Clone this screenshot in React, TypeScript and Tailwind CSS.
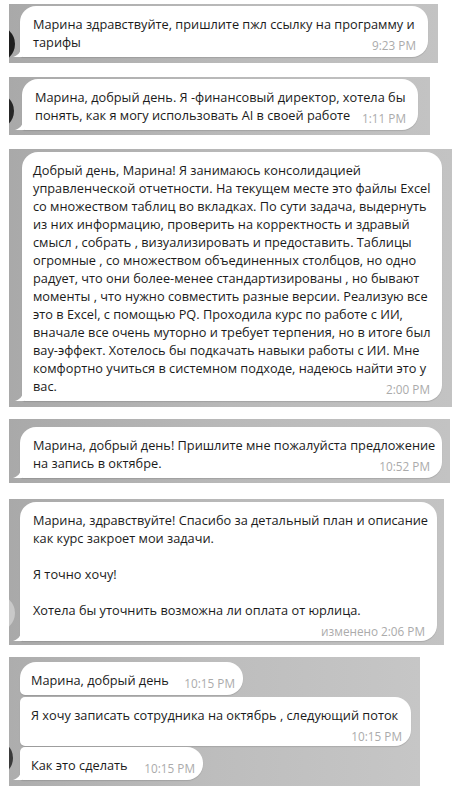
import React from "react";

type BubbleProps = {
  lines: string[];
  time: string;
  width: string;
  shape?: "single" | "first" | "middle" | "last";
  pad?: string;
};

const Tail = () => (
  <svg
    className="absolute -left-[7px] bottom-0"
    width="9"
    height="12"
    viewBox="0 0 9 12"
    fill="none"
  >
    <path d="M9 0 V12 H0 C4 11 8 8 9 0 Z" fill="#ffffff" />
  </svg>
);

const Bubble = ({ lines, time, width, shape = "single", pad = "pl-[13px] pr-[12px]" }: BubbleProps) => {
  const corners =
    shape === "single"
      ? "rounded-t-[16px] rounded-br-[16px] rounded-bl-[3px]"
      : shape === "first"
      ? "rounded-t-[16px] rounded-br-[16px] rounded-bl-[5px]"
      : shape === "middle"
      ? "rounded-r-[16px] rounded-l-[5px]"
      : "rounded-tl-[5px] rounded-r-[16px] rounded-bl-[3px]";
  const tail = shape === "single" || shape === "last";

  return (
    <div
      className={`relative flow-root bg-white ${corners} ${width} ${pad} pt-[9px] pb-[6px] shadow-[0_1px_1px_rgba(0,0,0,0.12)]`}
    >
      {tail && <Tail />}
      <div className="text-[12.75px] leading-[18px] text-[#1b1b1b] whitespace-nowrap">
        {lines.map((l, i) => (
          <React.Fragment key={i}>
            {i > 0 && <br />}
            {l === "" ? "\u00a0" : l}
          </React.Fragment>
        ))}
        <span className="float-right relative top-[4px] ml-[10px] text-[11.75px] leading-[16px] text-[#ababab]">
          {time}
        </span>
      </div>
    </div>
  );
};

const Panel = ({
  children,
  className,
  avatar,
}: {
  children: React.ReactNode;
  className: string;
  avatar?: React.ReactNode;
}) => (
  <div
    className={`relative overflow-hidden ml-[9px] bg-gradient-to-r from-[#a9a9a9] via-[#b9b9b9] to-[#c3c3c3] pl-[11px] ${className}`}
  >
    {avatar}
    {children}
  </div>
);

export default function App() {
  return (
    <div
      className="w-[462px] h-[797px] bg-white overflow-hidden pt-[4px]"
      style={{ fontFamily: '"Open Sans", "Noto Sans", sans-serif' }}
    >
      <Panel
        className="w-[429px] h-[59px] pt-[2px]"
        avatar={<div className="absolute -left-[30px] bottom-[1px] w-[36px] h-[36px] rounded-full bg-[#1e1e1e]" />}
      >
        <Bubble
          width="w-[408px]"
          time="9:23 PM"
          lines={["Марина здравствуйте, пришлите пжл ссылку на программу и", "тарифы"]}
        />
      </Panel>

      <Panel
        className="w-[421px] h-[58px] mt-[14px] pt-[2px] pl-[13px]"
        avatar={<div className="absolute -left-[31px] bottom-[6px] w-[36px] h-[36px] rounded-full bg-[#262626]" />}
      >
        <Bubble
          width="w-[396px]"
          time="1:11 PM"
          lines={[
            "Марина, добрый день. Я -финансовый директор, хотела бы",
            "понять, как я могу использовать AI в своей работе",
          ]}
        />
      </Panel>

      <Panel className="w-[443px] h-[258px] mt-[14px] pt-[3px] pl-[13px]">
        <Bubble
          width="w-[420px]"
          time="2:00 PM"
          pad="pl-[11px] pr-[12px]"
          lines={[
            "Добрый день, Марина! Я занимаюсь консолидацией",
            "управленческой отчетности. На текущем месте это файлы Excel",
            "со множеством таблиц во вкладках. По сути задача, выдернуть",
            "из них информацию, проверить на корректность и здравый",
            "смысл , собрать , визуализировать и предоставить. Таблицы",
            "огромные , со множеством объединенных столбцов, но одно",
            "радует, что они более-менее стандартизированы , но бывают",
            "моменты , что нужно совместить разные версии. Реализую все",
            "это в Excel, с помощью PQ. Проходила курс по работе с ИИ,",
            "вначале все очень муторно и требует терпения, но в итоге был",
            "вау-эффект. Хотелось бы подкачать навыки работы с ИИ. Мне",
            "комфортно учиться в системном подходе, надеюсь найти это у",
            "вас.",
          ]}
        />
      </Panel>

      <Panel className="w-[441px] h-[64px] mt-[12px] pt-[8px]">
        <Bubble
          width="w-[422px]"
          time="10:52 PM"
          lines={["Марина, добрый день! Пришлите мне пожалуйста предложение", "на запись в октябре."]}
        />
      </Panel>

      <Panel
        className="w-[435px] h-[146px] mt-[16px] pt-[3px]"
        avatar={<div className="absolute -left-[30px] bottom-[14px] w-[36px] h-[36px] rounded-full bg-[#c9c9c9]" />}
      >
        <Bubble
          width="w-[417px]"
          time="изменено 2:06 PM"
          lines={[
            "Марина, здравствуйте! Спасибо за детальный план и описание",
            "как курс закроет мои задачи.",
            "",
            "Я точно хочу!",
            "",
            "Хотела бы уточнить возможна ли оплата от юрлица.",
          ]}
        />
      </Panel>

      <Panel
        className="w-[411px] h-[129px] mt-[12px] pt-[5px] flex flex-col gap-[1.5px] bg-gradient-to-r from-[#adadad] via-[#bdbdbd] to-[#c6c6c6]"
        avatar={<div className="absolute -left-[32px] bottom-[10px] w-[36px] h-[36px] rounded-full bg-[#3a3a3a]" />}
      >
        <Bubble width="w-[223px]" shape="first" pad="pl-[11px] pr-[8px]" time="10:15 PM" lines={["Марина, добрый день"]} />
        <Bubble
          width="w-[391px]"
          shape="middle"
          pad="pl-[11px] pr-[9px]"
          time="10:15 PM"
          lines={["Я хочу записать сотрудника на октябрь , следующий поток"]}
        />
        <Bubble width="w-[183px]" shape="last" pad="pl-[11px] pr-[8px]" time="10:15 PM" lines={["Как это сделать"]} />
      </Panel>
    </div>
  );
}
